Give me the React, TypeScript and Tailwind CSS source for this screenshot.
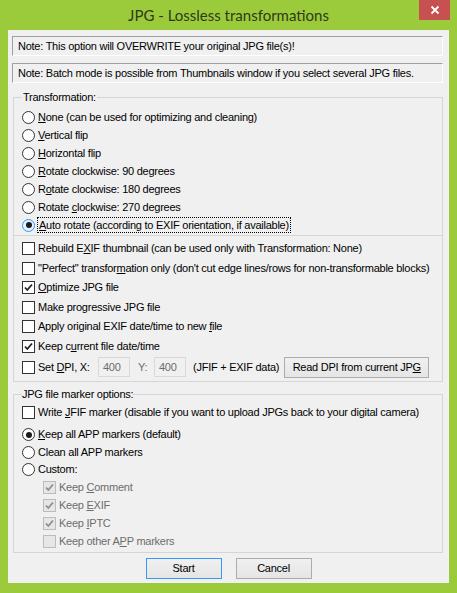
import React from 'react';

const font = "font-['Liberation_Sans',Arial,sans-serif] text-[11px] leading-[13px] tracking-[-0.25px] whitespace-nowrap";

type BoxProps = { checked?: boolean; disabled?: boolean; focused?: boolean };

const CheckBox: React.FC<BoxProps> = ({ checked, disabled }) => (
  <span
    className={`flex h-[13px] w-[13px] shrink-0 items-center justify-center border ${
      disabled ? 'border-[#bcbcbc] bg-[#e6e6e6]' : 'border-[#333333] bg-white'
    }`}
  >
    {checked && (
      <svg width="11" height="11" viewBox="0 0 11 11">
        <path
          d="M2 5.5 L4.3 8 L9 2.5"
          fill="none"
          stroke={disabled ? '#8d8d8d' : '#222222'}
          strokeWidth="1.8"
        />
      </svg>
    )}
  </span>
);

const Radio: React.FC<BoxProps> = ({ checked, focused }) => (
  <span
    className={`flex h-[13px] w-[13px] shrink-0 items-center justify-center rounded-full border ${
      focused ? 'border-[#3399ff] bg-[#e5f1fb]' : 'border-[#333333] bg-white'
    }`}
  >
    {checked && <span className="h-[6px] w-[6px] rounded-full bg-[#1b1b1b]" />}
  </span>
);

// text with one underlined access key
const Label: React.FC<{ pre: string; key_?: string; post?: string }> = ({ pre, key_, post }) => (
  <>
    {pre}
    {key_ && <span className="underline underline-offset-[1px]">{key_}</span>}
    {post}
  </>
);

const radios: { pre: string; k?: string; post?: string }[] = [
  { pre: '', k: 'N', post: 'one (can be used for optimizing and cleaning)' },
  { pre: '', k: 'V', post: 'ertical flip' },
  { pre: '', k: 'H', post: 'orizontal flip' },
  { pre: '', k: 'R', post: 'otate clockwise: 90 degrees' },
  { pre: 'R', k: 'o', post: 'tate clockwise: 180 degrees' },
  { pre: 'Rotate ', k: 'c', post: 'lockwise: 270 degrees' },
];

const checks: { pre: string; k?: string; post?: string; checked?: boolean }[] = [
  { pre: 'Rebuild E', k: 'X', post: 'IF thumbnail (can be used only with Transformation: None)' },
  { pre: '"Perfect" transfor', k: 'm', post: "ation only (don't cut edge lines/rows for non-transformable blocks)" },
  { pre: '', k: 'O', post: 'ptimize JPG file', checked: true },
  { pre: 'Make progressive JPG file' },
  { pre: 'Apply original EXIF date/time to new ', k: 'f', post: 'ile' },
  { pre: 'Keep c', k: 'u', post: 'rrent file date/time', checked: true },
];

const subChecks: { pre: string; k: string; post: string; checked: boolean }[] = [
  { pre: 'Keep ', k: 'C', post: 'omment', checked: true },
  { pre: 'Keep ', k: 'E', post: 'XIF', checked: true },
  { pre: 'Keep ', k: 'I', post: 'PTC', checked: true },
  { pre: 'Keep other A', k: 'P', post: 'P markers', checked: false },
];

const App: React.FC = () => {
  return (
    <div className="h-[593px] w-[457px] bg-[#9bcb3b]">
      <div className="grid h-[30px] grid-cols-[1fr_auto_1fr]">
        <div />
        <div className="self-center font-['Lato',sans-serif] text-[15px] leading-[20px] text-[#2e3a1c]">
          JPG - Lossless transformations
        </div>
        <div className="flex justify-end pr-[7px]">
          <button className="flex h-[20px] w-[31px] items-center justify-center bg-[#c75050]">
            <svg width="10" height="10" viewBox="0 0 10 10">
              <path d="M1.5 1.5 L8.5 8.5 M8.5 1.5 L1.5 8.5" stroke="#ffffff" strokeWidth="1.8" />
            </svg>
          </button>
        </div>
      </div>

      <div className={`mx-[8px] flex h-[553px] flex-col bg-[#f0f0f0] pl-[4px] pr-[6px] text-black ${font}`}>
        <div className="mt-[6px] flex h-[20px] items-center border border-b-white border-l-[#a0a0a0] border-r-white border-t-[#a0a0a0] pl-[5px]">
          Note: This option will OVERWRITE your original JPG file(s)!
        </div>
        <div className="mt-[7px] flex h-[20px] items-center border border-b-white border-l-[#a0a0a0] border-r-white border-t-[#a0a0a0] pl-[5px]">
          Note: Batch mode is possible from Thumbnails window if you select several JPG files.
        </div>

        <fieldset className="ml-[1px] mt-[8px] border border-[#d5d5d5] pb-[1px] pl-[8px] pt-[4px]">
          <legend className="px-[1px]">Transformation:</legend>
          {radios.map((r, i) => (
            <div key={i} className="flex h-[18px] items-center gap-[3px]">
              <Radio />
              <span>
                <Label pre={r.pre} key_={r.k} post={r.post} />
              </span>
            </div>
          ))}
          <div className="flex h-[18px] items-center gap-[2px]">
            <Radio checked focused />
            <span className="border border-dotted border-black px-[1px] leading-[14px]">
              <Label pre="" key_="A" post="uto rotate (according to EXIF orientation, if available)" />
            </span>
          </div>
        </fieldset>

        <div className="ml-[1px] border border-t-0 border-[#d5d5d5] pb-[3px] pl-[8px] pt-[3px]">
          {checks.map((c, i) => (
            <div key={i} className="flex h-[19.5px] items-center gap-[3px]">
              <CheckBox checked={c.checked} />
              <span>
                <Label pre={c.pre} key_={c.k} post={c.post} />
              </span>
            </div>
          ))}
          <div className="flex h-[22px] items-center">
            <CheckBox />
            <span className="ml-[3px] w-[60px]">
              <Label pre="Set " key_="D" post="PI, X:" />
            </span>
            <span className="flex h-[20px] w-[32px] items-center border border-[#d9d9d9] pl-[4px] text-[#6d6d6d]">
              400
            </span>
            <span className="ml-[8px] w-[16px] text-[#6d6d6d]">Y:</span>
            <span className="flex h-[20px] w-[32px] items-center border border-[#d9d9d9] pl-[4px] text-[#6d6d6d]">
              400
            </span>
            <span className="ml-[7px]">(JFIF + EXIF data)</span>
            <button className="ml-[5px] h-[21px] w-[145px] border border-[#acacac] bg-gradient-to-b from-[#f0f0f0] to-[#e5e5e5]">
              <Label pre="Read DPI from current JP" key_="G" />
            </button>
          </div>
        </div>

        <fieldset className="ml-[1px] mt-[6px] border border-[#d5d5d5] pb-[1px] pl-[8px] pt-[2px]">
          <legend className="px-0">JPG file marker options:</legend>
          <div className="flex h-[18px] items-center gap-[3px]">
            <CheckBox />
            <span>
              <Label pre="Write " key_="J" post="FIF marker (disable if you want to upload JPGs back to your digital camera)" />
            </span>
          </div>
          <div className="mt-[5px]">
            <div className="flex h-[17.5px] items-center gap-[3px]">
              <Radio checked />
              <span>
                <Label pre="" key_="K" post="eep all APP markers (default)" />
              </span>
            </div>
            <div className="flex h-[17.5px] items-center gap-[3px]">
              <Radio />
              <span>Clean all APP markers</span>
            </div>
            <div className="flex h-[17.5px] items-center gap-[3px]">
              <Radio />
              <span>Custom:</span>
            </div>
          </div>
          <div className="pl-[21px] text-[#6d6d6d]">
            {subChecks.map((c, i) => (
              <div key={i} className="flex h-[18px] items-center gap-[3px]">
                <CheckBox checked={c.checked} disabled />
                <span>
                  <Label pre={c.pre} key_={c.k} post={c.post} />
                </span>
              </div>
            ))}
          </div>
        </fieldset>

        <div className="mt-[5px] flex justify-center gap-[14px] pl-[2px]">
          <button className="h-[21px] w-[76px] border border-[#3399ff] bg-gradient-to-b from-[#f0f0f0] to-[#e5e5e5]">
            Start
          </button>
          <button className="h-[21px] w-[76px] border border-[#acacac] bg-gradient-to-b from-[#f0f0f0] to-[#e5e5e5]">
            Cancel
          </button>
        </div>
      </div>
    </div>
  );
};

export default App;
